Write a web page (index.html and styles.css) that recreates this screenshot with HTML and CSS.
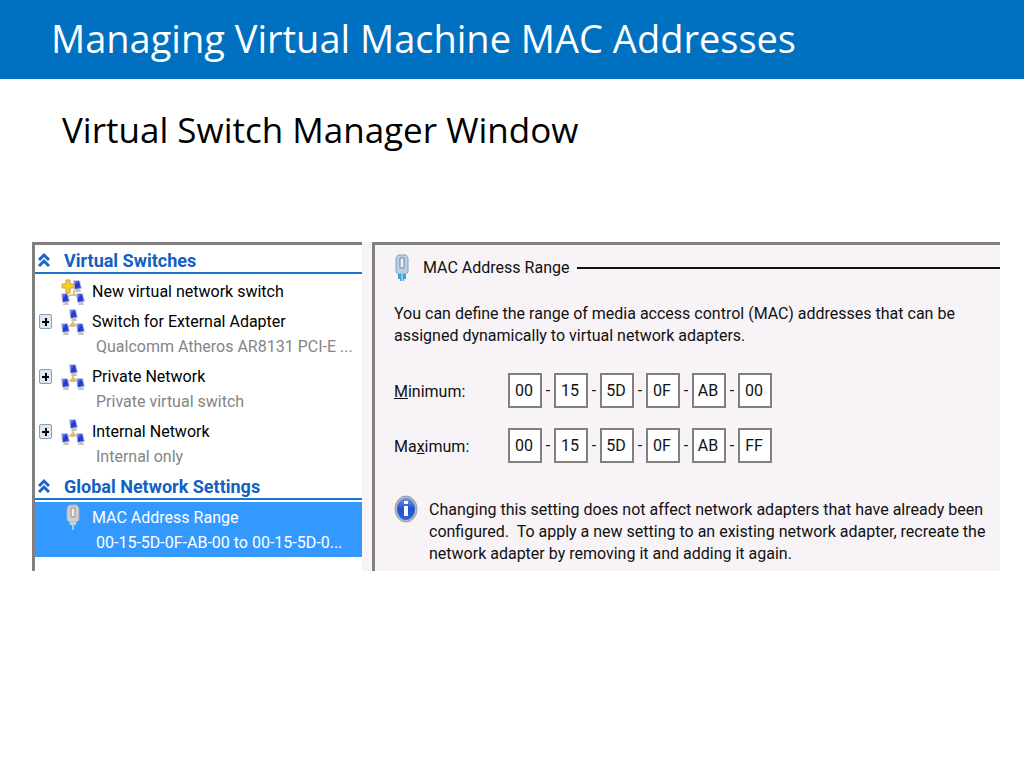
FILE: index.html
```html
<!DOCTYPE html>
<html lang="en">
<head>
<meta charset="utf-8">
<title>Managing Virtual Machine MAC Addresses</title>
<link rel="stylesheet" href="styles.css">
</head>
<body>
<svg class="defs" aria-hidden="true">
  <defs>
    <linearGradient id="screen" x1="0" y1="0" x2="1" y2="1">
      <stop offset="0" stop-color="#8a9cf4"/><stop offset=".45" stop-color="#2336cc"/><stop offset="1" stop-color="#3a52de"/>
    </linearGradient>
    <linearGradient id="ball" x1="0" y1="0" x2="0" y2="1">
      <stop offset="0" stop-color="#6d98ee"/><stop offset=".5" stop-color="#1f50cc"/><stop offset="1" stop-color="#2f66e0"/>
    </linearGradient>
    <g id="pc">
      <path d="M3 9h4l1 3H2z" fill="#c3c3b6"/>
      <path d="M0 0h7l2 9-8 1z" fill="#c3cbea"/>
      <path d="M1 1h5l2 7-6 1z" fill="url(#screen)"/>
    </g>
    <symbol id="net" viewBox="0 0 24 26">
      <path d="M12 10v5M7 18l3-2h4l3 2" fill="none" stroke="#dcb45c" stroke-width="1.500"/>
      <path d="M10 14h4v4h-4z" fill="#e3bd62"/>
      <use href="#pc" x="8" y="0"/><use href="#pc" x="0" y="14"/><use href="#pc" x="15" y="14"/>
    </symbol>
    <symbol id="newnet" viewBox="0 0 24 26">
      <path d="M13 11v5M7 18l3-2h4l3 2" fill="none" stroke="#dcb45c" stroke-width="1.500"/>
      <use href="#pc" x="12" y="1"/><use href="#pc" x="0" y="14"/><use href="#pc" x="15" y="14"/>
      <path d="M5 1h4v4h4v4H9v5H5V9H1V5h4z" fill="#f6cf2f" stroke="#d0a02c"/>
    </symbol>
    <symbol id="plug" viewBox="0 0 14 28">
      <path d="M3 1h8l2 3v14l-2 2H3l-2-2V4z" fill="#b9cfe4" stroke="#8ca3b8"/>
      <path d="M5 4h4v10H5z" fill="#eef4f9" stroke="#71869a"/>
      <path d="M3 20h8v5H9v2H5v-2H3z" fill="#3da2cc"/><path d="M6 20h2v7H6z" fill="#7cd0ea"/>
    </symbol>
    <symbol id="plug-sel" viewBox="0 0 14 28">
      <path d="M3 1h8l2 3v12l-2 2H3l-2-2V4z" fill="#d0d0d0" stroke="#a4aab0"/>
      <path d="M5 4h4v9H5z" fill="#f2f2f2" stroke="#8c8c8c"/>
      <path d="M4 18h6v3H4z" fill="#c8d4d8"/><path d="M6 20h2v6H6z" fill="#7fe0ea"/>
    </symbol>
    <symbol id="chev" viewBox="0 0 12 16">
      <path d="M1 8l5-5 5 5M1 14l5-5 5 5" fill="none" stroke="#1766c8" stroke-width="3"/>
    </symbol>
  </defs>
</svg>

<header class="banner"><h1>Managing Virtual Machine MAC Addresses</h1></header>
<main>
  <h2 class="subtitle">Virtual Switch Manager Window</h2>
  <div class="window">
    <nav class="tree">
      <button class="section"><svg class="chev"><use href="#chev"/></svg>Virtual Switches</button>
      <div class="row new"><svg class="net"><use href="#newnet"/></svg><span class="name">New virtual network switch</span></div>
      <div class="row">
        <button class="plus" aria-label="Expand Switch for External Adapter"></button>
        <svg class="net"><use href="#net"/></svg><span class="name">Switch for External Adapter</span>
        <span class="note">Qualcomm Atheros AR8131 PCI-E ...</span>
      </div>
      <div class="row">
        <button class="plus" aria-label="Expand Private Network"></button>
        <svg class="net"><use href="#net"/></svg><span class="name">Private Network</span>
        <span class="note">Private virtual switch</span>
      </div>
      <div class="row">
        <button class="plus" aria-label="Expand Internal Network"></button>
        <svg class="net"><use href="#net"/></svg><span class="name">Internal Network</span>
        <span class="note">Internal only</span>
      </div>
      <button class="section"><svg class="chev"><use href="#chev"/></svg>Global Network Settings</button>
      <div class="row selected">
        <svg class="plug"><use href="#plug-sel"/></svg><span class="name">MAC Address Range</span>
        <span class="note">00-15-5D-0F-AB-00 to 00-15-5D-0...</span>
      </div>
    </nav>
    <section class="detail">
      <div class="legend"><svg class="plug"><use href="#plug"/></svg><h3>MAC Address Range</h3><span class="rule"></span></div>
      <p class="intro">You can define the range of media access control (MAC) addresses that can be<br>assigned dynamically to virtual network adapters.</p>
      <div class="mac">
        <label for="min0"><u>M</u>inimum:</label>
        <input id="min0" value="00"><span>-</span><input aria-label="Minimum 2" value="15"><span>-</span><input aria-label="Minimum 3" value="5D"><span>-</span><input aria-label="Minimum 4" value="0F"><span>-</span><input aria-label="Minimum 5" value="AB"><span>-</span><input aria-label="Minimum 6" value="00">
      </div>
      <div class="mac">
        <label for="max0">Ma<u>x</u>imum:</label>
        <input id="max0" value="00"><span>-</span><input aria-label="Maximum 2" value="15"><span>-</span><input aria-label="Maximum 3" value="5D"><span>-</span><input aria-label="Maximum 4" value="0F"><span>-</span><input aria-label="Maximum 5" value="AB"><span>-</span><input aria-label="Maximum 6" value="FF">
      </div>
      <div class="info">
        <svg class="i" viewBox="0 0 24 28"><ellipse cx="12" cy="14" rx="11" ry="13" fill="#b5b8bd" stroke="#9a9ea3"/><ellipse cx="12" cy="14" rx="9" ry="11" fill="url(#ball)"/><path d="M10 6h4v3h-4zM10 11h4v10h-4z" fill="#fff"/></svg>
        <p>Changing this setting does not affect network adapters that have already been<br>configured.&nbsp; To apply a new setting to an existing network adapter, recreate the<br>network adapter by removing it and adding it again.</p>
      </div>
    </section>
  </div>
</main>
</body>
</html>
```
FILE: styles.css
```css
* { box-sizing: border-box; }
body { margin: 0; background: #fff; color: #000; font-family: Roboto, sans-serif; font-size: 16px; }
h1, h2, h3, p { margin: 0; font-weight: 400; }
button { border: 0; padding: 0; background: none; font: inherit; }
.defs { position: absolute; width: 0; height: 0; }
.banner { background: #0070c0; color: #fff; padding: 11px 51px 14px; }
.banner h1 { font: 38px/54px "Open Sans", sans-serif; white-space: nowrap; }
.subtitle { font: 35px/50px "Open Sans", sans-serif; padding: 26px 62px 0; }
.window { display: grid; grid-template-columns: minmax(0, 330fr) minmax(0, 628fr); column-gap: 10px; margin: 87px 24px 0 32px; background: #f7f3f7; white-space: nowrap; }
.tree { background: #fff; border: solid #808080; border-width: 3px 0 0 3px; padding-bottom: 14px; }
.section { display: flex; align-items: center; width: 100%; height: 29px; padding: 3px 0 0 3px; gap: 14px; border-bottom: 2px solid #1c75cf; color: #1160c4; font-size: 18px; font-weight: 700; }
.chev { width: 12px; height: 16px; }
.row { display: grid; grid-template-columns: 18px 24px auto; column-gap: 4px; grid-auto-rows: 25px; align-items: center; padding: 3px 0 2px 4px; }
.row .name { grid-column: 3; grid-row: 1; padding-left: 3px; }
.net { grid-column: 2; grid-row: 1; width: 24px; height: 26px; }
.tree .plug { grid-column: 2; grid-row: 1; justify-self: center; }
.note { grid-column: 3; padding-left: 7px; color: #858585; }
.new { margin-top: 2px; }
.plus { width: 13px; height: 15px; border: 1px solid #8b9eb2; border-radius: 2px; background: linear-gradient(#000, #000) center / 7px 2px no-repeat, linear-gradient(#000, #000) center / 2px 8px no-repeat, #dfe8f0; grid-row: 1; }
.selected { background: #3399ff; color: #fff; }
.selected .note { color: #fff; }
.section + .selected { margin-top: 2px; }
.plug { width: 14px; height: 28px; flex: none; }
.detail { border: solid #808080; border-width: 3px 0 0 3px; padding: 8px 0 6px 19px; color: #111; line-height: 22px; }
.legend { display: flex; align-items: center; gap: 14px; height: 30px; padding-left: 1px; }
.legend h3 { font-size: inherit; }
.rule { flex: 1; height: 2px; margin-left: -6px; background: #111; }
.intro { margin: 20px 0 26px; }
.mac { display: flex; align-items: center; margin-bottom: 20px; }
.mac label { width: 114px; padding-top: 2px; }
.mac input { width: 34px; height: 35px; padding: 0 2px 0 0; border: 2px solid #808080; background: #fff; color: #111; font: inherit; text-align: center; }
.mac span { width: 12px; text-align: center; }
.info { display: flex; gap: 11px; margin-top: 36px; }
.i { width: 24px; height: 28px; margin-top: -4px; flex: none; }
```
